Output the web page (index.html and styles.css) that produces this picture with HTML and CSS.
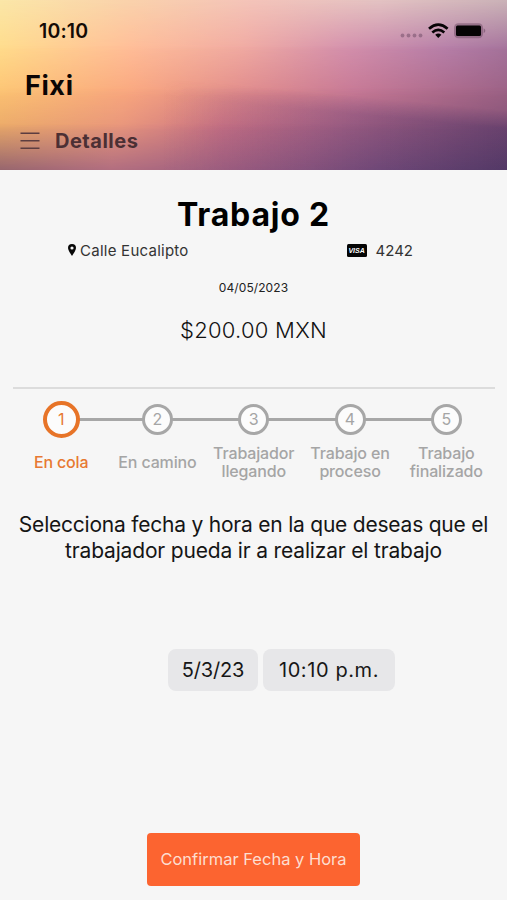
FILE: index.html
```html
<!DOCTYPE html>
<html lang="es">
<head>
<meta charset="utf-8">
<meta name="viewport" content="width=device-width, initial-scale=1">
<title>Fixi</title>
<link rel="stylesheet" href="styles.css">
</head>
<body>
<header class="hero">
  <div class="sky sky-1"></div>
  <div class="sky sky-2"></div>
  <div class="sky sky-3"></div>
  <div class="sky sky-4"></div>
  <div class="sky sky-5"></div>
  <div class="sky cloud"></div>
  <div class="status">
    <span class="clock">10:10</span>
    <svg class="signal" width="88" height="20" viewBox="0 0 88 20">
      <g fill="#5b3b55" opacity=".42"><circle cx="3.5" cy="14.500" r="1.900"/><circle cx="9.500" cy="14.500" r="1.900"/><circle cx="15.500" cy="14.500" r="1.900"/><circle cx="21.500" cy="14.500" r="1.900"/></g>
      <g fill="none" stroke="#080406" stroke-width="2.700"><path d="M30 7.700Q39.300-.5 48.600 7.700"/><path d="M33.300 11.400Q39.300 6.200 45.300 11.400"/></g>
      <path d="M36.200 13.800Q39.300 11.400 42.400 13.800L39.300 17Z" fill="#080406"/>
      <rect x="55" y="2.300" width="29" height="15" rx="4.500" fill="#6d4964" opacity=".5"/>
      <rect x="57" y="4.500" width="25" height="10.600" rx="1.500" fill="#050304"/>
      <path d="M84.700 7.300Q88 9.800 84.700 12.300Z" fill="#6d4964" opacity=".6"/>
    </svg>
  </div>
  <div class="brand">Fixi</div>
  <div class="nav">
    <svg width="20" height="18" viewBox="0 0 20 18" stroke="#5c3d40" stroke-width="1.500"><path d="M.5 1.300h19M.5 8.800h19M.5 16.300h19"/></svg>
    <span class="nav-title">Detalles</span>
  </div>
</header>
<main>
  <h1><span>Trabajo 2</span></h1>
  <div class="meta">
    <div class="place">
      <svg width="8" height="12" viewBox="0 0 8 12"><path fill="#080808" fill-rule="evenodd" d="M4 0a4 4 0 0 1 4 4C8 6.200 5.500 9.500 4 12 2.500 9.500 0 6.200 0 4a4 4 0 0 1 4-4Zm0 2.400a1.600 1.600 0 1 0 0 3.200 1.600 1.600 0 0 0 0-3.200Z"/></svg>
      <span class="street">Calle Eucalipto</span>
    </div>
    <div class="card"><span class="visa">VISA</span><span class="digits">4242</span></div>
  </div>
  <div class="date"><span>04/05/2023</span></div>
  <div class="price"><span>$200.00 MXN</span></div>
  <ol class="steps">
    <li class="active"><div class="dot">1</div><div class="label">En cola</div></li>
    <li><div class="dot">2</div><div class="label">En camino</div></li>
    <li><div class="dot">3</div><div class="label">Trabajador<br>llegando</div></li>
    <li><div class="dot">4</div><div class="label">Trabajo en<br>proceso</div></li>
    <li><div class="dot">5</div><div class="label">Trabajo<br>finalizado</div></li>
  </ol>
  <p class="prompt"><span class="line-1">Selecciona fecha y hora en la que deseas que el</span><br><span class="line-2">trabajador pueda ir a realizar el trabajo</span></p>
  <div class="pickers"><button class="pick-date">5/3/23</button><button class="pick-time">10:10 p.m.</button></div>
  <button class="confirm">Confirmar Fecha y Hora</button>
</main>
</body>
</html>
```
FILE: styles.css
```css
* { box-sizing: border-box; }
body { margin: 0; height: 900px; overflow: hidden; background: #f6f6f6; color: #111; font-family: Inter, "Liberation Sans", sans-serif; }
button { border: 0; padding: 0; font-family: inherit; white-space: nowrap; }
.hero { position: relative; height: 170px; overflow: hidden; }
.sky { position: absolute; inset: 0; }
.sky-1 { background: linear-gradient(90deg, #fbe7a8, #fad2ac 26%, #f4c4ba 50%, #e4c3c3 75%, #cbb3b8); }
.sky-2 { background: linear-gradient(90deg, #ffdc8c, #ffbd98 26%, #f0aaa2 48%, #d490ac 68%, #b67ea8 88%, #a4729b); mask-image: linear-gradient(transparent, #000 50px); }
.sky-3 { background: linear-gradient(90deg, #fdc373, #f9a67e 26%, #e08b8b 48%, #c67894 70%, #9c6184); mask-image: linear-gradient(transparent 46px, #000 96px); }
.sky-4 { background: linear-gradient(90deg, #eaa969, #e7957c 24%, #c87184 44%, #a96687 68%, #855277); mask-image: linear-gradient(transparent 88px, #000 130px); }
.sky-5 { background: linear-gradient(90deg, #93626e, #af6c80 22%, #9c5e80 46%, #764f7c 75%, #5d4169); mask-image: linear-gradient(transparent 124px, #000 172px); }
.cloud { background: linear-gradient(90deg, transparent 32%, rgba(112, 62, 116, .22) 60%, rgba(66, 44, 98, .4)); mask-image: linear-gradient(185.4deg, transparent 110px, #000 128px); }
.status { position: relative; display: flex; justify-content: space-between; padding: 21px 20px 0 39px; height: 68px; }
.clock { font-size: 19.500px; line-height: 21px; font-weight: 600; color: #140b05; letter-spacing: .15px; }
.brand { position: relative; padding-left: 25px; height: 62px; font-size: 27px; line-height: 36px; font-weight: 700; color: #0b0605; letter-spacing: .6px; }
.nav { position: relative; display: flex; align-items: center; gap: 15px; height: 22px; padding-left: 20px; }
.nav-title { font-size: 20px; font-weight: 700; color: #4b3034; letter-spacing: .5px; }
main { display: flex; flex-direction: column; }
h1 { margin: 25px 0 0; height: 40px; text-align: center; font-size: 32px; line-height: 40px; font-weight: 700; color: #000; letter-spacing: .8px; }
.meta { display: flex; justify-content: space-between; height: 30px; align-items: center; padding: 0 94px 0 68px; font-size: 15px; color: #333; }
.place, .card { display: flex; align-items: center; }
.place { gap: 4px; }
.street { letter-spacing: .25px; }
.card { gap: 9px; }
.visa { width: 20px; height: 13px; border-radius: 1.500px; background: #050505; color: #fff; font: italic 700 7px/13px "Liberation Sans", sans-serif; text-align: center; }
.date { margin-top: 13px; height: 20px; line-height: 20px; text-align: center; font-size: 12px; color: #222; letter-spacing: .1px; }
.price { margin-top: 18px; height: 28px; line-height: 28px; text-align: center; font-size: 22px; font-weight: 300; color: #111; letter-spacing: .25px; }
.steps { display: grid; grid-template-columns: repeat(5, 1fr); list-style: none; margin: 43px 12.500px 0 13px; padding: 12px 0 0; height: 99px; border-top: 2px solid #dcdcdc; }
.steps li { position: relative; text-align: center; color: #a5a5a5; }
.dot { position: relative; z-index: 1; width: 31px; height: 31px; margin: 3px auto; border: 3px solid #a7a7a7; border-radius: 50%; background: #fcfcfc; font-size: 16px; line-height: 25px; }
.steps li:not(:last-child)::after { content: ""; position: absolute; left: 50%; width: 100%; top: 17px; height: 3px; background: #a7a7a7; }
.active .dot { width: 37px; height: 37px; margin: 0 auto; border: 4px solid #e77428; line-height: 29px; }
.steps .active { color: #e77932; }
.label { display: flex; align-items: center; justify-content: center; height: 38px; margin-top: 8px; font-size: 16px; line-height: 18.500px; font-weight: 500; letter-spacing: -.15px; white-space: nowrap; }
.active .label { margin-top: 5px; }
.prompt { margin: 26px 0 0; height: 53px; text-align: center; font-size: 21px; line-height: 26px; letter-spacing: -.22px; white-space: nowrap; color: #151515; }
.line-2 { letter-spacing: -.17px; }
.pickers { display: flex; gap: 5px; margin: 84px 0 0 168px; }
.pickers button { height: 42px; border-radius: 8px; background: #e7e7e9; color: #171717; font-size: 20px; }
.pickers .pick-date { width: 90px; letter-spacing: -.2px; }
.pickers .pick-time { width: 132px; font-size: 20px; letter-spacing: .6px; }
.confirm { align-self: center; width: 213px; height: 53px; margin-top: 142px; padding-bottom: 2px; border-radius: 4px; background: #fc6430; color: #fdded0; font-size: 16.500px; }
```
